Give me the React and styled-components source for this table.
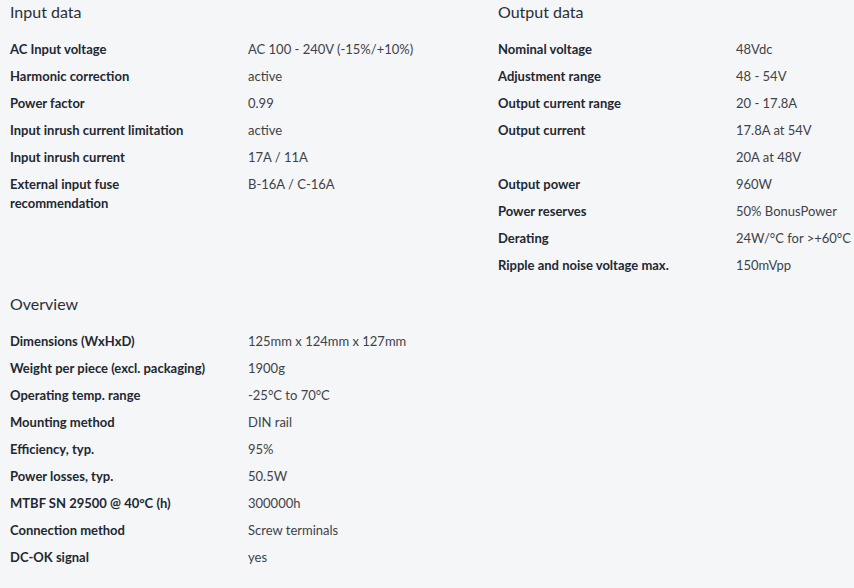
import React from "react"
import styled, { createGlobalStyle } from "styled-components"

const Global = createGlobalStyle`
  html, body {
    margin: 0;
    padding: 0;
    background: #f5f6f8;
  }
  body {
    font-family: Lato, "Liberation Sans", sans-serif;
    color: #222831;
  }
`

const Page = styled("div")`
  display: grid;
  grid-template-columns: 488px 1fr;
  align-content: start;
  padding: 0 0 0 10px;
  width: 854px;
  height: 588px;
  box-sizing: border-box;
  overflow: hidden;
`

const Section = styled("section")`
  margin-bottom: 13px;
`

const Title = styled("h2")`
  margin: 0 0 12px;
  font-size: 16px;
  line-height: 24px;
  font-weight: 400;
  color: #2a2f36;
`

const Row = styled("div")`
  display: grid;
  grid-template-columns: 238px 1fr;
  padding: 4px 0;
  font-size: 13px;
  line-height: 19px;
`

const Label = styled("div")`
  font-weight: 700;
  color: #222831;
  padding-right: 32px;
`

const Value = styled("div")`
  color: #3d4248;
`

const input = [
  ["AC Input voltage", "AC 100 - 240V (-15%/+10%)"],
  ["Harmonic correction", "active"],
  ["Power factor", "0.99"],
  ["Input inrush current limitation", "active"],
  ["Input inrush current", "17A / 11A"],
  ["External input fuse recommendation", "B-16A / C-16A"],
]

const output = [
  ["Nominal voltage", "48Vdc"],
  ["Adjustment range", "48 - 54V"],
  ["Output current range", "20 - 17.8A"],
  ["Output current", "17.8A at 54V"],
  ["", "20A at 48V"],
  ["Output power", "960W"],
  ["Power reserves", "50% BonusPower"],
  ["Derating", "24W/°C for >+60°C"],
  ["Ripple and noise voltage max.", "150mVpp"],
]

const overview = [
  ["Dimensions (WxHxD)", "125mm x 124mm x 127mm"],
  ["Weight per piece (excl. packaging)", "1900g"],
  ["Operating temp. range", "-25°C to 70°C"],
  ["Mounting method", "DIN rail"],
  ["Efficiency, typ.", "95%"],
  ["Power losses, typ.", "50.5W"],
  ["MTBF SN 29500 @ 40°C (h)", "300000h"],
  ["Connection method", "Screw terminals"],
  ["DC-OK signal", "yes"],
]

const Specs = ({ title, rows }) => (
  <Section>
    <Title>{title}</Title>
    {rows.map(([k, v], i) => (
      <Row key={i}>
        <Label>{k}</Label>
        <Value>{v}</Value>
      </Row>
    ))}
  </Section>
)

export default function App() {
  return (
    <>
      <Global />
      <Page>
        <Specs title="Input data" rows={input} />
        <Specs title="Output data" rows={output} />
        <Specs title="Overview" rows={overview} />
      </Page>
    </>
  )
}
